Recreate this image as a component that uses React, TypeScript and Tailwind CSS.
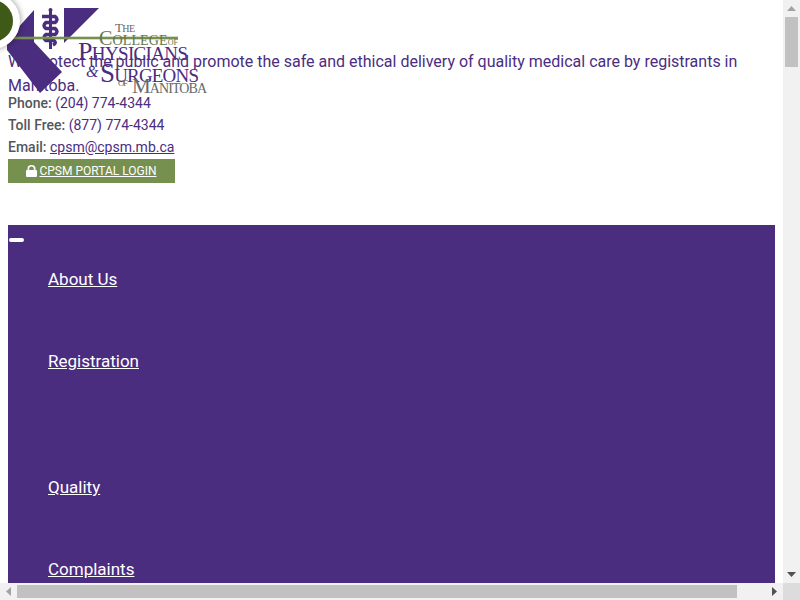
const P = "#4b2d7f";
const G = "#66686a";

function Logo() {
  return (
    <svg className="absolute left-0 top-0" width="215" height="100" viewBox="0 0 215 100">
      <polygon points="34,10 7,40 7,50 40,93 62,72 34,42" fill={P} />
      <polygon points="64,8 99,8 64,43" fill={P} />
      <rect x="49" y="10" width="3" height="39" fill={P} />
      <circle cx="50.500" cy="10" r="2" fill={P} />
      <path d="M42 16.500H55Q59 19.500 55 22.500H46Q42 25.500 46 28.500H55Q59 31.500 55 34.500H46Q42 37.500 46 40.500H54Q57 43 53 45" stroke={P} strokeWidth="3.500" fill="none" />
      <rect x="12" y="36.700" width="166" height="2.600" fill="#75904f" />
      <g fontFamily="'Liberation Serif', serif">
        <text x="115" y="32" fontSize="13" fill={G} textLength="20">T<tspan fontSize="10">HE</tspan></text>
        <text x="99" y="44.500" fontSize="20" fill="#67754f" textLength="79">C<tspan fontSize="14">OLLEGE</tspan><tspan fontSize="8">OF</tspan></text>
        <text x="78" y="60" fontSize="26" fill={P} textLength="110">P<tspan fontSize="19">HYSICIANS</tspan></text>
        <text x="86" y="77" fontSize="16" fontStyle="italic" fill={P}>&amp;</text>
        <text x="100" y="82" fontSize="27" fill={P} textLength="99">S<tspan fontSize="19">URGEONS</tspan></text>
        <text x="118" y="86" fontSize="9" fill={G} textLength="10">OF</text>
        <text x="132" y="93" fontSize="21" fill={G} textLength="75">M<tspan fontSize="14">ANITOBA</tspan></text>
      </g>
    </svg>
  );
}

export default function App() {
  return (
    <div className="flex h-[600px] w-[800px] flex-col overflow-hidden bg-white font-['Roboto',sans-serif]">
      <div className="flex min-h-0 flex-1">
        <main className="relative min-w-0 flex-1 overflow-hidden px-2 pt-[50px]">
          <p className="text-base leading-6 text-[#4b2d7f]">
            We protect the public and promote the safe and ethical delivery of quality medical care by registrants in Manitoba.
          </p>
          <div className="mt-[-6px] text-sm font-medium leading-[22px] text-[#54565b]">
            <div>Phone: <span className="font-normal text-[#4b2d7f]">(204) 774-4344</span></div>
            <div>Toll Free: <span className="font-normal text-[#4b2d7f]">(877) 774-4344</span></div>
            <div>Email: <a className="font-normal text-[#4b2d7f] underline">cpsm@cpsm.mb.ca</a></div>
          </div>
          <a className="mt-[1px] flex h-6 w-[167px] items-center justify-center gap-[2px] bg-[#75904f] text-xs text-white underline">
            <svg width="11" height="12" viewBox="0 0 11 12" fill="white">
              <path d="M1.500 5V3.500a4 3.500 0 0 1 8 0V5h.5a1 1 0 0 1 1 1v5a1 1 0 0 1-1 1H1a1 1 0 0 1-1-1V6a1 1 0 0 1 1-1zM3.200 5h4.600V3.500a2.300 2 0 0 0-4.600 0z" />
            </svg>
            CPSM PORTAL LOGIN
          </a>
          <nav className="mt-[42px] h-[500px] bg-[#4b2d7f] text-white">
            <div className="h-[41px] pl-px pt-[13px]">
              <div className="h-1 w-[15px] rounded-sm bg-white" />
            </div>
            <ul className="pl-10 text-[17px] font-normal leading-[27px] underline">
              <li><a>About Us</a></li>
              <li className="mt-[55px]"><a>Registration</a></li>
              <li className="mt-[99px]"><a>Quality</a></li>
              <li className="mt-[55px]"><a>Complaints</a></li>
            </ul>
          </nav>
          <Logo />
          <div className="absolute left-[-36px] top-[-7px] h-14 w-14 rounded-full border-[7px] border-white bg-[#3f5a16] shadow-[0_0_6px_rgba(0,0,0,0.45)]" />
        </main>
        <div className="flex w-[17px] flex-col bg-[#f1f1f1]">
          <div className="flex h-[17px] items-center justify-center text-[#a3a3a3]">
            <svg width="9" height="5" viewBox="0 0 9 5" fill="currentColor"><path d="M4.500 0 9 5H0z" /></svg>
          </div>
          <div className="mx-auto h-[50px] w-[13px] bg-[#c1c1c1]" />
          <div className="flex-1" />
          <div className="flex h-[17px] items-center justify-center text-[#505050]">
            <svg width="9" height="5" viewBox="0 0 9 5" fill="currentColor"><path d="M0 0h9L4.500 5z" /></svg>
          </div>
        </div>
      </div>
      <div className="flex h-[17px] bg-[#f1f1f1]">
        <div className="flex w-[17px] items-center justify-center text-[#a3a3a3]">
          <svg width="5" height="9" viewBox="0 0 5 9" fill="currentColor"><path d="M5 0v9L0 4.500z" /></svg>
        </div>
        <div className="mt-[2px] mb-[2px] w-[720px] bg-[#c1c1c1]" />
        <div className="flex-1" />
        <div className="flex w-[17px] items-center justify-center text-[#505050]">
          <svg width="5" height="9" viewBox="0 0 5 9" fill="currentColor"><path d="M0 0v9l5-4.500z" /></svg>
        </div>
        <div className="w-[17px] bg-[#dcdcdc]" />
      </div>
    </div>
  );
}
